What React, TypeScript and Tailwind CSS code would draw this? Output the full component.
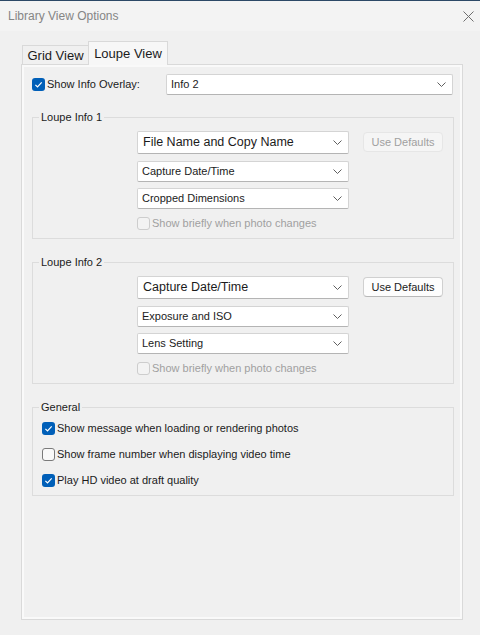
import React from "react";

const Chevron = () => (
  <svg width="9" height="5" viewBox="0 0 9 5" className="shrink-0">
    <path d="M0.5 0.5 L4.5 4.5 L8.5 0.5" stroke="#5f5f5f" strokeWidth="1" fill="none" />
  </svg>
);

function Dropdown({ text, large, className = "" }: { text: string; large?: boolean; className?: string }) {
  return (
    <div
      className={`flex items-center justify-between bg-white border border-[#d4d4d4] border-b-[#b4b4b4] rounded-[2px] pr-[6px] ${
        large ? "h-[23px] pl-[5px] text-[12.5px]" : "h-[21px] pl-[4px] text-[11px]"
      } ${className}`}
    >
      <span className="leading-none text-[#1b1b1b]">{text}</span>
      <Chevron />
    </div>
  );
}

function CheckBox({ checked, disabled }: { checked?: boolean; disabled?: boolean }) {
  if (checked) {
    return (
      <div className="w-[13px] h-[13px] rounded-[3px] bg-[#005fb8] flex items-center justify-center shrink-0">
        <svg width="13" height="13" viewBox="0 0 13 13">
          <path d="M3.4 6.9 L5.5 9 L9.7 4.3" stroke="white" strokeWidth="1.2" fill="none" />
        </svg>
      </div>
    );
  }
  return (
    <div
      className={`w-[13px] h-[13px] rounded-[3px] border shrink-0 ${
        disabled ? "border-[#cdcdcd] bg-[#f3f3f3]" : "border-[#7a7a7a] bg-[#f9f9f9]"
      }`}
    />
  );
}

function CheckRow({ label, checked, disabled, className = "" }: { label: string; checked?: boolean; disabled?: boolean; className?: string }) {
  return (
    <div className={`flex items-center h-[14px] ${className}`}>
      <CheckBox checked={checked} disabled={disabled} />
      <span className={`ml-[2px] leading-none ${disabled ? "text-[#a0a0a0]" : "text-[#1b1b1b]"}`}>{label}</span>
    </div>
  );
}

function UseDefaults({ disabled }: { disabled?: boolean }) {
  return (
    <div
      className={`ml-[14px] mt-[1px] w-[80px] h-[20px] rounded-[4px] border flex items-center justify-center text-[11px] leading-none ${
        disabled
          ? "bg-[#f5f5f5] border-[#e6e6e6] text-[#a0a0a0]"
          : "bg-[#fdfdfd] border-[#d0d0d0] border-b-[#b8b8b8] text-[#1b1b1b]"
      }`}
    >
      Use Defaults
    </div>
  );
}

function Group({ title, className = "", children }: { title: string; className?: string; children: React.ReactNode }) {
  return (
    <fieldset className={`border border-[#dcdcdc] p-0 m-0 ${className}`}>
      <legend className="ml-[6px] px-[2px] leading-[16px] text-[11px] text-[#1b1b1b]">{title}</legend>
      {children}
    </fieldset>
  );
}

function LoupeGroup({ title, rows, defaultsDisabled, className }: { title: string; rows: string[]; defaultsDisabled?: boolean; className?: string }) {
  return (
    <Group title={title} className={className}>
      <div className="pl-[104px] pt-[6px] pb-[8px] flex flex-col">
        <div className="flex items-start">
          <Dropdown text={rows[0]} large className="w-[212px]" />
          <UseDefaults disabled={defaultsDisabled} />
        </div>
        <Dropdown text={rows[1]} className="w-[212px] mt-[7px]" />
        <Dropdown text={rows[2]} className="w-[212px] mt-[6px]" />
        <CheckRow label="Show briefly when photo changes" disabled className="mt-[7px]" />
      </div>
    </Group>
  );
}

export default function App() {
  return (
    <div
      className="w-[480px] h-[635px] bg-[#f0f0f0] border-t border-[#2c4866] flex flex-col text-[11px] text-[#1b1b1b]"
      style={{ fontFamily: '"Segoe UI", "Liberation Sans", Arial, sans-serif' }}
    >
      {/* title bar */}
      <div className="h-[30px] flex items-center justify-between pl-[8px] pr-[6px] bg-[#f3f3f3]">
        <span className="text-[12px] text-[#858585] leading-none">Library View Options</span>
        <svg width="11" height="11" viewBox="0 0 11 11">
          <path d="M0.5 0.5 L10.5 10.5 M10.5 0.5 L0.5 10.5" stroke="#6e6e6e" strokeWidth="1" />
        </svg>
      </div>

      {/* tabs */}
      <div className="h-[33px] pl-[22px] flex items-end">
        <div className="h-[19px] w-[66px] border-t border-l border-[#d9d9d9] bg-[#f0f0f0] flex items-center justify-center text-[13px] leading-none">
          Grid View
        </div>
        <div className="relative z-10 -mb-px h-[24px] w-[80px] border-t border-l border-r border-[#d9d9d9] bg-[#f7f7f7] flex items-center justify-center pb-[1px] text-[13px] leading-none">
          Loupe View
        </div>
      </div>

      {/* panel */}
      <div className="ml-[21px] w-[442px] h-[556px] border border-[#d9d9d9] bg-[#f0f0f0] shadow-[inset_1px_1px_0_#f9f9f9,inset_-1px_-1px_0_#f9f9f9,inset_2px_2px_0_#f9f9f9,inset_-2px_-2px_0_#f9f9f9] pt-[9px] pl-[10px] pr-[8px] flex flex-col">
        <div className="flex items-center h-[21px]">
          <div className="w-[134px] flex items-center">
            <CheckBox checked />
            <span className="ml-[2px] leading-none">Show Info Overlay:</span>
          </div>
          <Dropdown text="Info 2" className="flex-1 mr-[1px]" />
        </div>

        <LoupeGroup
          title="Loupe Info 1"
          rows={["File Name and Copy Name", "Capture Date/Time", "Cropped Dimensions"]}
          defaultsDisabled
          className="mt-[14px]"
        />

        <LoupeGroup
          title="Loupe Info 2"
          rows={["Capture Date/Time", "Exposure and ISO", "Lens Setting"]}
          className="mt-[15px]"
        />

        <Group title="General" className="mt-[15px]">
          <div className="pl-[9px] pt-[6px] pb-[8px] flex flex-col gap-[12px]">
            <CheckRow label="Show message when loading or rendering photos" checked />
            <CheckRow label="Show frame number when displaying video time" />
            <CheckRow label="Play HD video at draft quality" checked />
          </div>
        </Group>
      </div>
    </div>
  );
}
